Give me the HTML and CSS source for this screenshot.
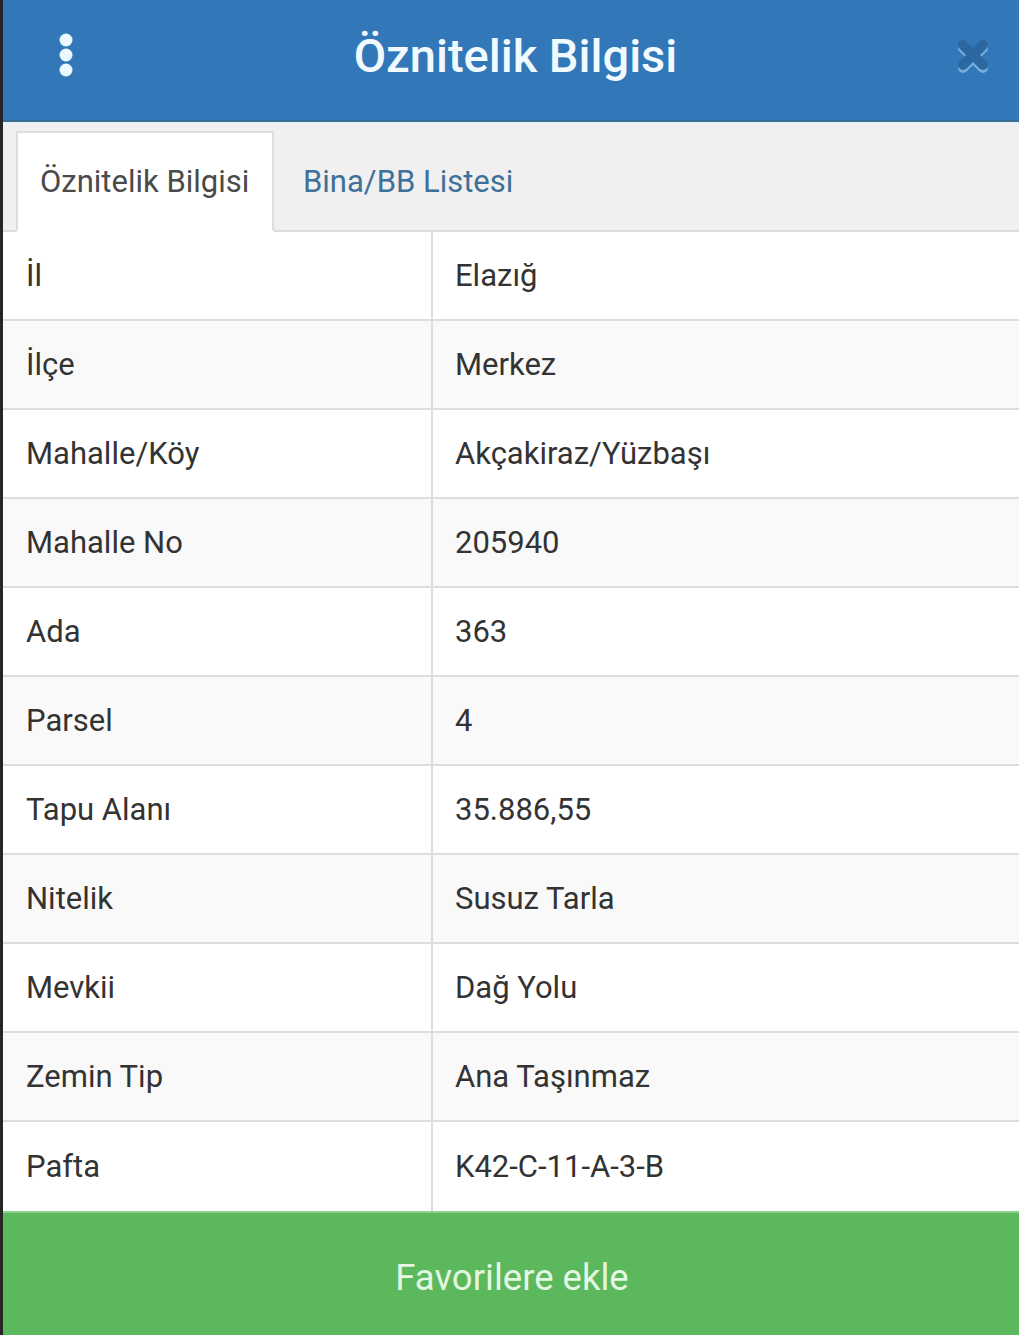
FILE: index.html
```html
<!DOCTYPE html>
<html lang="tr">
<head>
<meta charset="utf-8">
<title>Öznitelik Bilgisi</title>
<link rel="stylesheet" href="styles.css">
</head>
<body>
<div class="app">
  <header class="header">
    <span class="menu" aria-label="menu">
      <svg width="16" height="46" viewBox="0 0 16 46"><circle cx="8" cy="8" r="6.5" fill="#eaf8ff"/><circle cx="8" cy="23" r="6.5" fill="#eaf8ff"/><circle cx="8" cy="38" r="6.5" fill="#eaf8ff"/></svg>
    </span>
    <h1 class="title">Öznitelik Bilgisi</h1>
    <span class="close" aria-label="kapat">
      <svg width="36" height="36" viewBox="0 0 36 36"><path d="M8 10 L28 30 M28 10 L8 30" stroke="#8cc0ea" stroke-width="10" stroke-linecap="round" opacity="0.75"/><path d="M8 7 L28 27 M28 7 L8 27" stroke="#2b67a1" stroke-width="10" stroke-linecap="round"/></svg>
    </span>
  </header>
  <nav class="tabs">
    <div class="tab active">Öznitelik Bilgisi</div>
    <div class="tab">Bina/BB Listesi</div>
  </nav>
  <div class="table">
    <div class="row"><div class="cell key">İl</div><div class="cell val">Elazığ</div></div>
    <div class="row"><div class="cell key">İlçe</div><div class="cell val">Merkez</div></div>
    <div class="row"><div class="cell key">Mahalle/Köy</div><div class="cell val">Akçakiraz/Yüzbaşı</div></div>
    <div class="row"><div class="cell key">Mahalle No</div><div class="cell val">205940</div></div>
    <div class="row"><div class="cell key">Ada</div><div class="cell val">363</div></div>
    <div class="row"><div class="cell key">Parsel</div><div class="cell val">4</div></div>
    <div class="row"><div class="cell key">Tapu Alanı</div><div class="cell val">35.886,55</div></div>
    <div class="row"><div class="cell key">Nitelik</div><div class="cell val">Susuz Tarla</div></div>
    <div class="row"><div class="cell key">Mevkii</div><div class="cell val">Dağ Yolu</div></div>
    <div class="row"><div class="cell key">Zemin Tip</div><div class="cell val">Ana Taşınmaz</div></div>
    <div class="row"><div class="cell key">Pafta</div><div class="cell val">K42-C-11-A-3-B</div></div>
  </div>
  <button class="fav">Favorilere ekle</button>
</div>
</body>
</html>
```
FILE: styles.css
```css
* { box-sizing: border-box; }
html, body { margin: 0; padding: 0; }
body {
  background: #262626;
  font-family: Roboto, "Liberation Sans", Arial, sans-serif;
  width: 1019px;
  height: 1335px;
  overflow: hidden;
}
.app {
  margin-left: 3px;
  height: 1335px;
  display: flex;
  flex-direction: column;
  background: #fff;
}
.header {
  height: 122px;
  background: #3278b8;
  border-bottom: 2px solid #3b6e93;
  display: flex;
  align-items: center;
  justify-content: space-between;
  padding: 0 28px 0 55px;
}
.menu { display: flex; width: 16px; margin-top: -10px; }
.title {
  margin: 0;
  font-size: 47px;
  font-weight: 500;
  color: #f0faff;
  margin-top: -10px;
  margin-left: 2px;
}
.close { display: flex; margin-top: -8px; }
.tabs {
  height: 110px;
  background: #f0f0f0;
  border-top: 2px solid #e6f2fb;
  border-bottom: 2px solid #dcdcdc;
  display: flex;
  align-items: flex-end;
  padding-left: 13px;
}
.tab {
  height: 101px;
  margin-bottom: -2px;
  padding: 0 23px 0 23px;
  display: flex;
  align-items: center;
  font-size: 31px;
  color: #3f7099;
}
.tab.active {
  background: #fff;
  color: #4a4a4a;
  border: 2px solid #dedede;
  border-bottom: 2px solid #fff;
  width: 258px;
  padding-left: 22px;
  padding-right: 0;
  margin-right: 6px;
}
.table { display: flex; flex-direction: column; }
.row {
  height: 89px;
  display: flex;
  border-bottom: 2px solid #dddddd;
}
.row:nth-child(even) { background: #f9f9f9; }
.row:last-child { border-bottom: none; }
.cell {
  display: flex;
  align-items: center;
  font-size: 31px;
  color: #333333;
}
.key {
  width: 430px;
  padding-left: 23px;
  border-right: 2px solid #dddddd;
}
.val { flex: 1; padding-left: 22px; }
.fav {
  flex: 1;
  border: none;
  border-top: 2px solid #8fd08f;
  background: #5cb85c;
  color: #e3f7e3;
  font-family: Roboto, "Liberation Sans", Arial, sans-serif;
  font-size: 36.5px;
  padding: 6px 0 0 2px;
  margin: 0;
  width: 100%;
  cursor: pointer;
}
```
